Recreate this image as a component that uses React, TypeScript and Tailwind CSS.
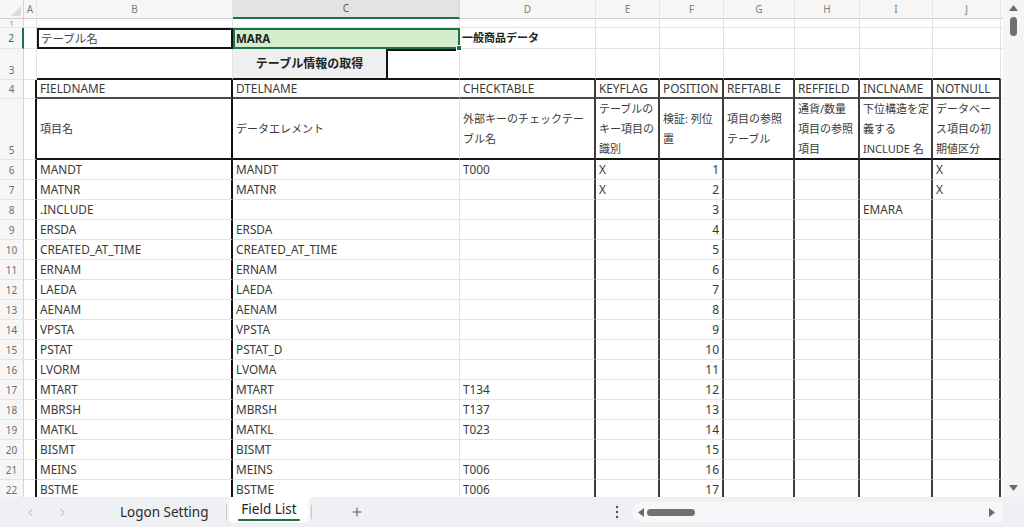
import React from "react";
import { ChevronLeft, ChevronRight, Plus } from "lucide-react";

const FONT = "font-['Noto_Sans','Noto_Sans_CJK_JP',sans-serif]";

const COLS = ["", "A", "B", "C", "D", "E", "F", "G", "H", "I", "J", ""];

const headers = ["FIELDNAME", "DTELNAME", "CHECKTABLE", "KEYFLAG", "POSITION", "REFTABLE", "REFFIELD", "INCLNAME", "NOTNULL"];

const descs: string[][] = [
  ["項目名"],
  ["データエレメント"],
  ["外部キーのチェックテー", "ブル名"],
  ["テーブルの", "キー項目の", "識別"],
  ["検証: 列位", "置"],
  ["項目の参照", "テーブル"],
  ["通貨/数量", "項目の参照", "項目"],
  ["下位構造を定", "義する", "INCLUDE 名"],
  ["データベー", "ス項目の初", "期値区分"],
];

const data: string[][] = [
  ["MANDT", "MANDT", "T000", "X", "1", "", "", "", "X"],
  ["MATNR", "MATNR", "", "X", "2", "", "", "", "X"],
  [".INCLUDE", "", "", "", "3", "", "", "EMARA", ""],
  ["ERSDA", "ERSDA", "", "", "4", "", "", "", ""],
  ["CREATED_AT_TIME", "CREATED_AT_TIME", "", "", "5", "", "", "", ""],
  ["ERNAM", "ERNAM", "", "", "6", "", "", "", ""],
  ["LAEDA", "LAEDA", "", "", "7", "", "", "", ""],
  ["AENAM", "AENAM", "", "", "8", "", "", "", ""],
  ["VPSTA", "VPSTA", "", "", "9", "", "", "", ""],
  ["PSTAT", "PSTAT_D", "", "", "10", "", "", "", ""],
  ["LVORM", "LVOMA", "", "", "11", "", "", "", ""],
  ["MTART", "MTART", "T134", "", "12", "", "", "", ""],
  ["MBRSH", "MBRSH", "T137", "", "13", "", "", "", ""],
  ["MATKL", "MATKL", "T023", "", "14", "", "", "", ""],
  ["BISMT", "BISMT", "", "", "15", "", "", "", ""],
  ["MEINS", "MEINS", "T006", "", "16", "", "", "", ""],
  ["BSTME", "BSTME", "T006", "", "17", "", "", "", ""],
];

function borders(r: number, c: number): string {
  let right = "border-r border-r-[#e2e2e2]";
  let bottom = "border-b border-b-[#e2e2e2]";
  if (r >= 4) {
    if (c === 1 || c === 2) right = "border-r-2 border-r-[#141414]";
    else if (c >= 4 && c <= 10) right = "border-r-2 border-r-[#3d3d3d]";
  }
  if (c >= 2 && c <= 10) {
    if (r === 3) bottom = "border-b-2 border-b-[#141414]";
    else if (r === 4) bottom = "border-b-2 border-b-[#4a4a4a]";
    else if (r === 5) bottom = "border-b-2 border-b-[#141414]";
  }
  return right + " " + bottom;
}

function RowHeader({ r }: { r: number }) {
  const active = r === 2;
  return (
    <div
      className={
        "box-border flex items-end justify-center overflow-hidden bg-[#f6f6f6] border-b border-b-[#e4e4e4] text-[10px] leading-[12px] " +
        (active
          ? "border-r-2 border-r-[#1e7145] text-[#1e7145] pb-[4px]"
          : r === 1
          ? "border-r border-r-[#d4d4d4] text-[#888] pb-0"
          : "border-r border-r-[#d4d4d4] text-[#6e6e6e] pb-[3px]")
      }
    >
      {r === 1 ? <span className="leading-[6px] text-[7px]">1</span> : r}
    </div>
  );
}

function Tri({ dir }: { dir: "up" | "down" | "left" | "right" }) {
  const pts =
    dir === "up" ? "0,7 4.5,1 9,7" : dir === "down" ? "0,1 9,1 4.5,7" : dir === "left" ? "7,0 7,9 1,4.5" : "1,0 1,9 7,4.5";
  return (
    <svg width="9" height="9" viewBox="0 0 9 9">
      <polygon points={pts} fill="#6b6b6b" />
    </svg>
  );
}

export default function App() {
  const cells: React.ReactNode[] = [];

  // column header row
  COLS.forEach((l, c) => {
    const sel = c === 3;
    cells.push(
      <div
        key={"h" + c}
        className={
          "box-border flex items-center justify-center text-[10px] " +
          (c === 0
            ? "bg-[#f6f6f6] border-r border-r-[#d4d4d4] border-b border-b-[#d0d0d0] items-end justify-end"
            : sel
            ? "bg-[#e3e3e3] text-[#555] border-b-2 border-b-[#1e7145] border-r border-r-[#d8d8d8]"
            : "bg-[#f6f6f6] text-[#808080] border-b border-b-[#d0d0d0] border-r border-r-[#e6e6e6]")
        }
      >
        {c === 0 ? (
          <svg width="10" height="10" viewBox="0 0 10 10" className="mr-[2px] mb-[2px]">
            <polygon points="10,0 10,10 0,10" fill="#dcdcdc" />
          </svg>
        ) : (
          l
        )}
      </div>
    );
  });

  for (let r = 1; r <= 22; r++) {
    cells.push(<RowHeader key={"r" + r} r={r} />);
    for (let c = 1; c <= 11; c++) {
      const key = r + "-" + c;
      const b = borders(r, c);
      let content: React.ReactNode = null;
      let extra = "px-[3px] flex items-center";

      if (r === 2 && c === 2) {
        cells.push(
          <div key={key} className="box-border border-2 border-[#141414] flex items-center px-[2px] text-[#444] text-[11.5px]">
            テーブル名
          </div>
        );
        continue;
      }
      if (r === 2 && c === 3) {
        cells.push(
          <div key={key} className="relative box-border border-2 border-[#1e7145] bg-[#d4edcd] flex items-center px-[1px] font-bold text-[#222] text-[11.5px]">
            MARA
            <div className="absolute right-[-4px] bottom-[-4px] w-[6px] h-[6px] bg-[#1e7145] border border-white" />
          </div>
        );
        continue;
      }
      if (r === 2 && c === 4) {
        cells.push(
          <div key={key} className={"box-border flex items-center px-[2px] font-bold text-[#222] overflow-visible whitespace-nowrap " + b}>
            一般商品データ
          </div>
        );
        continue;
      }
      if (r === 3 && c === 3) {
        cells.push(
          <div key={key} className={"box-border flex " + b}>
            <div className="w-[153px] bg-[#efefef] flex items-center justify-center font-bold text-[12px] text-[#222]">
              テーブル情報の取得
            </div>
            <div className="flex-1 border-l-2 border-l-[#141414] border-t-2 border-t-[#141414]" />
          </div>
        );
        continue;
      }
      if (r === 4 && c >= 2 && c <= 10) {
        content = headers[c - 2];
        extra = "px-[3px] flex items-center text-[11.8px]";
      }
      if (r === 5 && c >= 2 && c <= 10) {
        content = (
          <div className="flex flex-col leading-[20px]">
            {descs[c - 2].map((s, i) => (
              <div key={i}>{s}</div>
            ))}
          </div>
        );
      }
      if (r >= 6 && c >= 2 && c <= 10) {
        const v = data[r - 6][c - 2];
        content = v;
        extra = c === 6 ? "pr-[3px] flex items-center justify-end text-[12px]" : "px-[3px] flex items-center text-[11.8px]";
      }
      cells.push(
        <div key={key} className={"box-border overflow-hidden whitespace-nowrap text-[#3a3a3a] " + extra + " " + b}>
          {content}
        </div>
      );
    }
  }

  return (
    <div className={"w-[1024px] h-[527px] flex flex-col bg-white overflow-hidden text-[11px] " + FONT}>
      <div className="flex h-[497px] overflow-hidden">
        <div className="w-[1003px] h-[497px] overflow-hidden">
          <div className="grid grid-cols-[24px_13px_196px_227px_136px_64px_64px_71px_65px_73px_68px_3px] grid-rows-[19px_9px_21px_31px_19px_61px_repeat(17,20px)]">
            {cells}
          </div>
        </div>
        <div className="w-[21px] h-full bg-[#f5f5f5] flex flex-col items-center">
          <div className="mt-[3px] h-[10px] flex items-center">
            <Tri dir="up" />
          </div>
          <div className="mt-[4px] w-[7px] h-[19px] rounded-full bg-[#707070]" />
          <div className="flex-1" />
          <div className="mb-[4px] h-[10px] flex items-center">
            <Tri dir="down" />
          </div>
        </div>
      </div>
      <div className="h-[30px] flex items-center bg-[#eef0f3] text-[13.5px]">
        <div className="w-[100px] flex items-center pl-[24px] gap-[19px] text-[#a0a0a0]">
          <ChevronLeft size={13} strokeWidth={1.5} />
          <ChevronRight size={13} strokeWidth={1.5} />
        </div>
        <div className="w-[126px] pl-[20px] text-[#2a2a2a]">Logon Setting</div>
        <div className="w-px h-[14px] bg-[#c9c9c9]" />
        <div className="ml-[2px] w-[80px] h-[26px] self-start bg-white rounded-b-[5px] flex flex-col items-center justify-center">
          <div className="relative text-[#1f1f1f] leading-[16px] pb-[3px] px-[3px]">
            Field List
            <div className="absolute left-0 right-0 bottom-[-1px] h-[2px] rounded bg-[#1e7145]" />
          </div>
        </div>
        <div className="ml-[2px] w-px h-[14px] bg-[#c9c9c9]" />
        <div className="w-[90px] flex justify-center text-[#444]">
          <Plus size={14} strokeWidth={1.5} />
        </div>
        <div className="flex-1" />
        <div className="w-[24px] flex justify-center">
          <svg width="4" height="14" viewBox="0 0 4 14">
            <circle cx="2" cy="2" r="1.2" fill="#555" />
            <circle cx="2" cy="7" r="1.2" fill="#555" />
            <circle cx="2" cy="12" r="1.2" fill="#555" />
          </svg>
        </div>
        <div className="ml-[3px] w-[371px] h-[20px] rounded-l-[10px] bg-[#f6f7f8] flex items-center pl-[5px] pr-[6px]">
          <Tri dir="left" />
          <div className="ml-[1px] w-[48px] h-[7px] rounded-full bg-[#707070]" />
          <div className="flex-1" />
          <Tri dir="right" />
        </div>
        <div className="w-[21px]" />
      </div>
    </div>
  );
}
